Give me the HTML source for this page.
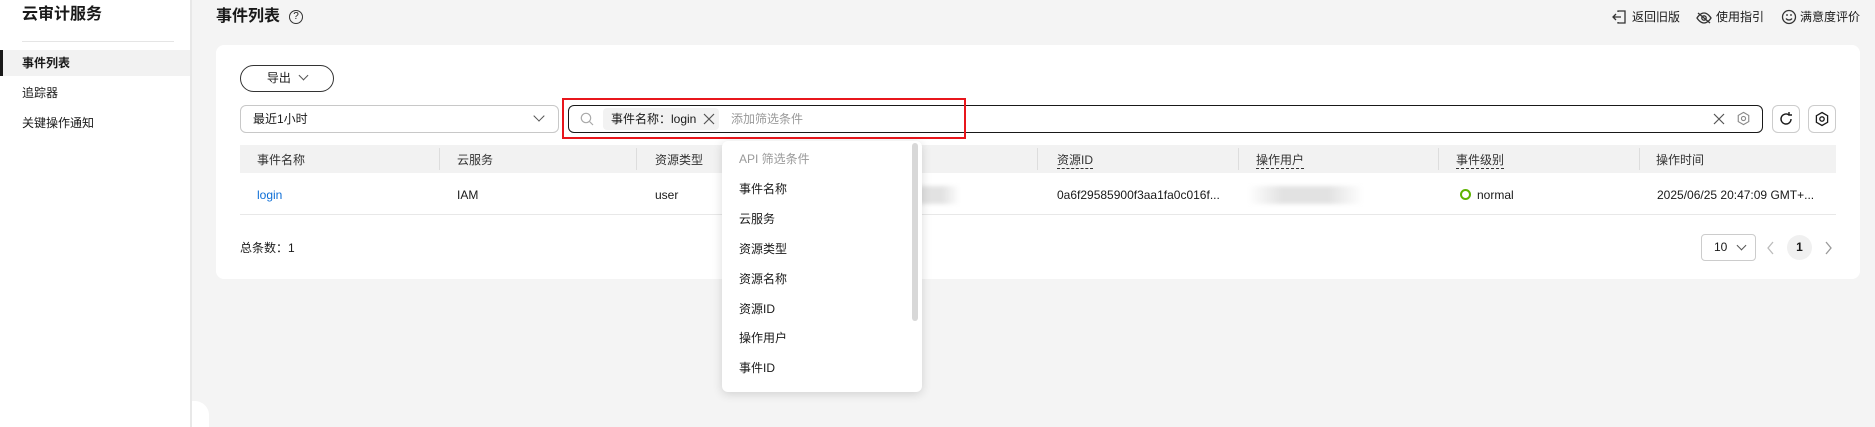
<!DOCTYPE html><html><head><meta charset="utf-8"><style>
*{box-sizing:border-box;margin:0;padding:0}
body{width:1875px;height:427px;overflow:hidden;background:#f4f4f4;font-family:"Liberation Sans","Noto Sans CJK SC",sans-serif;font-size:12px;line-height:18px;color:#191919;position:relative}
.a{position:absolute;white-space:nowrap}
.side{left:0;top:0;width:192px;height:427px;background:#fff;border-right:2px solid #e8e8e8}
.card{left:216px;top:45px;width:1644px;height:234px;background:#fff;border-radius:8px}
.th{color:#333}
.dash{border-bottom:1px dashed #333;line-height:16px}
.sep{width:1px;height:22px;background:#ddd;top:148px}
.blur{background:linear-gradient(90deg,#fff,#e2e2e2 30%,#e2e2e2 70%,#fff);height:18px;filter:blur(2px)}
</style></head><body>
<div class="a side"></div>
<div class="a" style="left:192px;top:401px;width:17px;height:26px;background:#fff;border-top-right-radius:14px"></div>
<div class="a" style="left:22px;top:3px;font-size:16px;line-height:24px;font-weight:bold">云审计服务</div>
<div class="a" style="left:22px;top:41px;width:152px;height:1px;background:#e5e5e5"></div>
<div class="a" style="left:0;top:50px;width:190px;height:26px;background:#f2f2f2;border-left:3px solid #191919"></div>
<div class="a" style="left:22px;top:54px;font-weight:bold">事件列表</div>
<div class="a" style="left:22px;top:84px">追踪器</div>
<div class="a" style="left:22px;top:114px">关键操作通知</div>

<div class="a" style="left:216px;top:5px;font-size:16px;line-height:24px;font-weight:bold">事件列表</div>
<div class="a" style="left:289px;top:10px;width:14px;height:14px;border:1.3px solid #333;border-radius:50%;font-size:10px;text-align:center;line-height:12px">?</div>

<svg class="a" style="left:1612px;top:9px" width="16" height="16" viewBox="0 0 16 16" fill="none" stroke="#333" stroke-width="1.3"><path d="M6 3V2h7v12H6v-1M1 8h8M4 5L1 8l3 3"/></svg>
<div class="a" style="left:1632px;top:8px">返回旧版</div>
<svg class="a" style="left:1696px;top:11px" width="16" height="14" viewBox="0 0 16 14" fill="none" stroke="#333" stroke-width="1.3"><path d="M1 7s3-5 7-5 7 5 7 5-3 5-7 5-7-5-7-5z"/><circle cx="8" cy="7" r="2.2"/><path d="M2 2l12 10"/></svg>
<div class="a" style="left:1716px;top:8px">使用指引</div>
<svg class="a" style="left:1781px;top:9px" width="16" height="16" viewBox="0 0 16 16" fill="none" stroke="#333" stroke-width="1.3"><circle cx="8" cy="8" r="6.5"/><path d="M5 9.5c1.5 2 4.5 2 6 0M5 6h2M9 6h2"/></svg>
<div class="a" style="left:1800px;top:8px">满意度评价</div>

<div class="a card"></div>
<div class="a" style="left:240px;top:65px;width:94px;height:27px;border:1px solid #333;border-radius:14px;text-align:center;line-height:25px">导出 <span style="display:inline-block;width:7px;height:7px;border-right:1.2px solid #555;border-bottom:1.2px solid #555;transform:rotate(45deg);margin:0 0 3px 6px"></span></div>
<div class="a" style="left:240px;top:105px;width:319px;height:28px;border:1px solid #c8c8c8;border-radius:6px;padding-left:12px;line-height:26px">最近1小时</div>
<div class="a" style="left:535px;top:112px;width:8px;height:8px;border-right:1.3px solid #555;border-bottom:1.3px solid #555;transform:rotate(45deg)"></div>
<div class="a" style="left:568px;top:105px;width:1195px;height:28px;border:1.3px solid #191919;border-radius:6px"></div>
<svg class="a" style="left:580px;top:112px" width="14" height="14" viewBox="0 0 14 14" fill="none" stroke="#aaa" stroke-width="1.2"><circle cx="6" cy="6" r="4.7"/><path d="M9.5 9.5L13 13"/></svg>
<div class="a" style="left:603px;top:108px;width:116px;height:22px;background:#f2f2f2;border-radius:4px;padding-left:8px;line-height:22px">事件名称：login</div>
<svg class="a" style="left:703px;top:113px" width="12" height="12" viewBox="0 0 12 12" stroke="#555" stroke-width="1.2"><path d="M1 1l10 10M11 1L1 11"/></svg>
<div class="a" style="left:731px;top:110px;color:#999">添加筛选条件</div>
<div class="a" style="left:562px;top:98px;width:404px;height:41px;border:2px solid #e8161c"></div>
<svg class="a" style="left:1713px;top:113px" width="12" height="12" viewBox="0 0 12 12" stroke="#555" stroke-width="1.2"><path d="M1 1l10 10M11 1L1 11"/></svg>
<svg class="a" style="left:1736px;top:111px" width="15" height="15" viewBox="0 0 16 16" fill="none" stroke="#888" stroke-width="1.2"><path d="M8 1.5l5.6 3.2v6.6L8 14.5l-5.6-3.2V4.7z"/><circle cx="8" cy="8" r="2.2"/></svg>
<div class="a" style="left:1772px;top:105px;width:28px;height:28px;border:1px solid #ccc;border-radius:6px"></div>
<svg class="a" style="left:1778px;top:111px" width="16" height="16" viewBox="0 0 16 16" fill="none" stroke="#191919" stroke-width="1.4"><path d="M13 8a5 5 0 1 1-2-4M11 1v3h3"/></svg>
<div class="a" style="left:1808px;top:105px;width:28px;height:28px;border:1px solid #ccc;border-radius:6px"></div>
<svg class="a" style="left:1814px;top:111px" width="16" height="16" viewBox="0 0 16 16" fill="none" stroke="#191919" stroke-width="1.3"><path d="M8 1.5l5.6 3.2v6.6L8 14.5l-5.6-3.2V4.7z"/><circle cx="8" cy="8" r="2.2"/></svg>

<div class="a" style="left:240px;top:145px;width:1596px;height:28px;background:#f2f2f2"></div>
<div class="a" style="left:240px;top:214px;width:1596px;height:1px;background:#e8e8e8"></div>
<div class="a sep" style="left:439px"></div><div class="a sep" style="left:636px"></div><div class="a sep" style="left:1037px"></div><div class="a sep" style="left:1238px"></div><div class="a sep" style="left:1438px"></div><div class="a sep" style="left:1639px"></div>
<div class="a th" style="left:257px;top:151px">事件名称</div>
<div class="a th" style="left:457px;top:151px">云服务</div>
<div class="a th" style="left:655px;top:151px">资源类型</div>
<div class="a th dash" style="left:1057px;top:152px">资源ID</div>
<div class="a th dash" style="left:1256px;top:152px">操作用户</div>
<div class="a th dash" style="left:1456px;top:152px">事件级别</div>
<div class="a th" style="left:1656px;top:151px">操作时间</div>
<div class="a" style="left:257px;top:186px;color:#0d6ed6">login</div>
<div class="a" style="left:457px;top:186px">IAM</div>
<div class="a" style="left:655px;top:186px">user</div>
<div class="a blur" style="left:900px;top:186px;width:60px"></div>
<div class="a" style="left:1057px;top:186px">0a6f29585900f3aa1fa0c016f...</div>
<div class="a blur" style="left:1248px;top:186px;width:115px"></div>
<div class="a" style="left:1460px;top:189px;width:11px;height:11px;border:2.2px solid #5db300;border-radius:50%"></div>
<div class="a" style="left:1477px;top:186px">normal</div>
<div class="a" style="left:1657px;top:186px">2025/06/25 20:47:09 GMT+...</div>

<div class="a" style="left:240px;top:239px">总条数：1</div>
<div class="a" style="left:1701px;top:234px;width:55px;height:27px;border:1px solid #ccc;border-radius:4px;padding-left:12px;line-height:25px">10</div>
<div class="a" style="left:1738px;top:242px;width:7px;height:7px;border-right:1.2px solid #555;border-bottom:1.2px solid #555;transform:rotate(45deg)"></div>
<svg class="a" style="left:1766px;top:241px" width="10" height="14" viewBox="0 0 10 14" fill="none" stroke="#bbb" stroke-width="1.3"><path d="M7 1L2 7l5 6"/></svg>
<div class="a" style="left:1787px;top:235px;width:25px;height:25px;border-radius:50%;background:#f0f0f0;text-align:center;line-height:25px;font-weight:bold">1</div>
<svg class="a" style="left:1823px;top:241px" width="10" height="14" viewBox="0 0 10 14" fill="none" stroke="#999" stroke-width="1.3"><path d="M3 1l5 6-5 6"/></svg>

<div class="a" style="left:722px;top:141px;width:200px;height:251px;background:#fff;border-radius:6px;box-shadow:0 2px 10px rgba(0,0,0,.15)"></div>
<div class="a" style="left:912px;top:143px;width:6px;height:178px;background:#d8d8d8;border-radius:3px"></div>
<div class="a" style="left:739px;top:150px;color:#999">API 筛选条件</div>
<div class="a" style="left:739px;top:180px">事件名称</div>
<div class="a" style="left:739px;top:210px">云服务</div>
<div class="a" style="left:739px;top:240px">资源类型</div>
<div class="a" style="left:739px;top:270px">资源名称</div>
<div class="a" style="left:739px;top:300px">资源ID</div>
<div class="a" style="left:739px;top:329px">操作用户</div>
<div class="a" style="left:739px;top:359px">事件ID</div>
</body></html>
